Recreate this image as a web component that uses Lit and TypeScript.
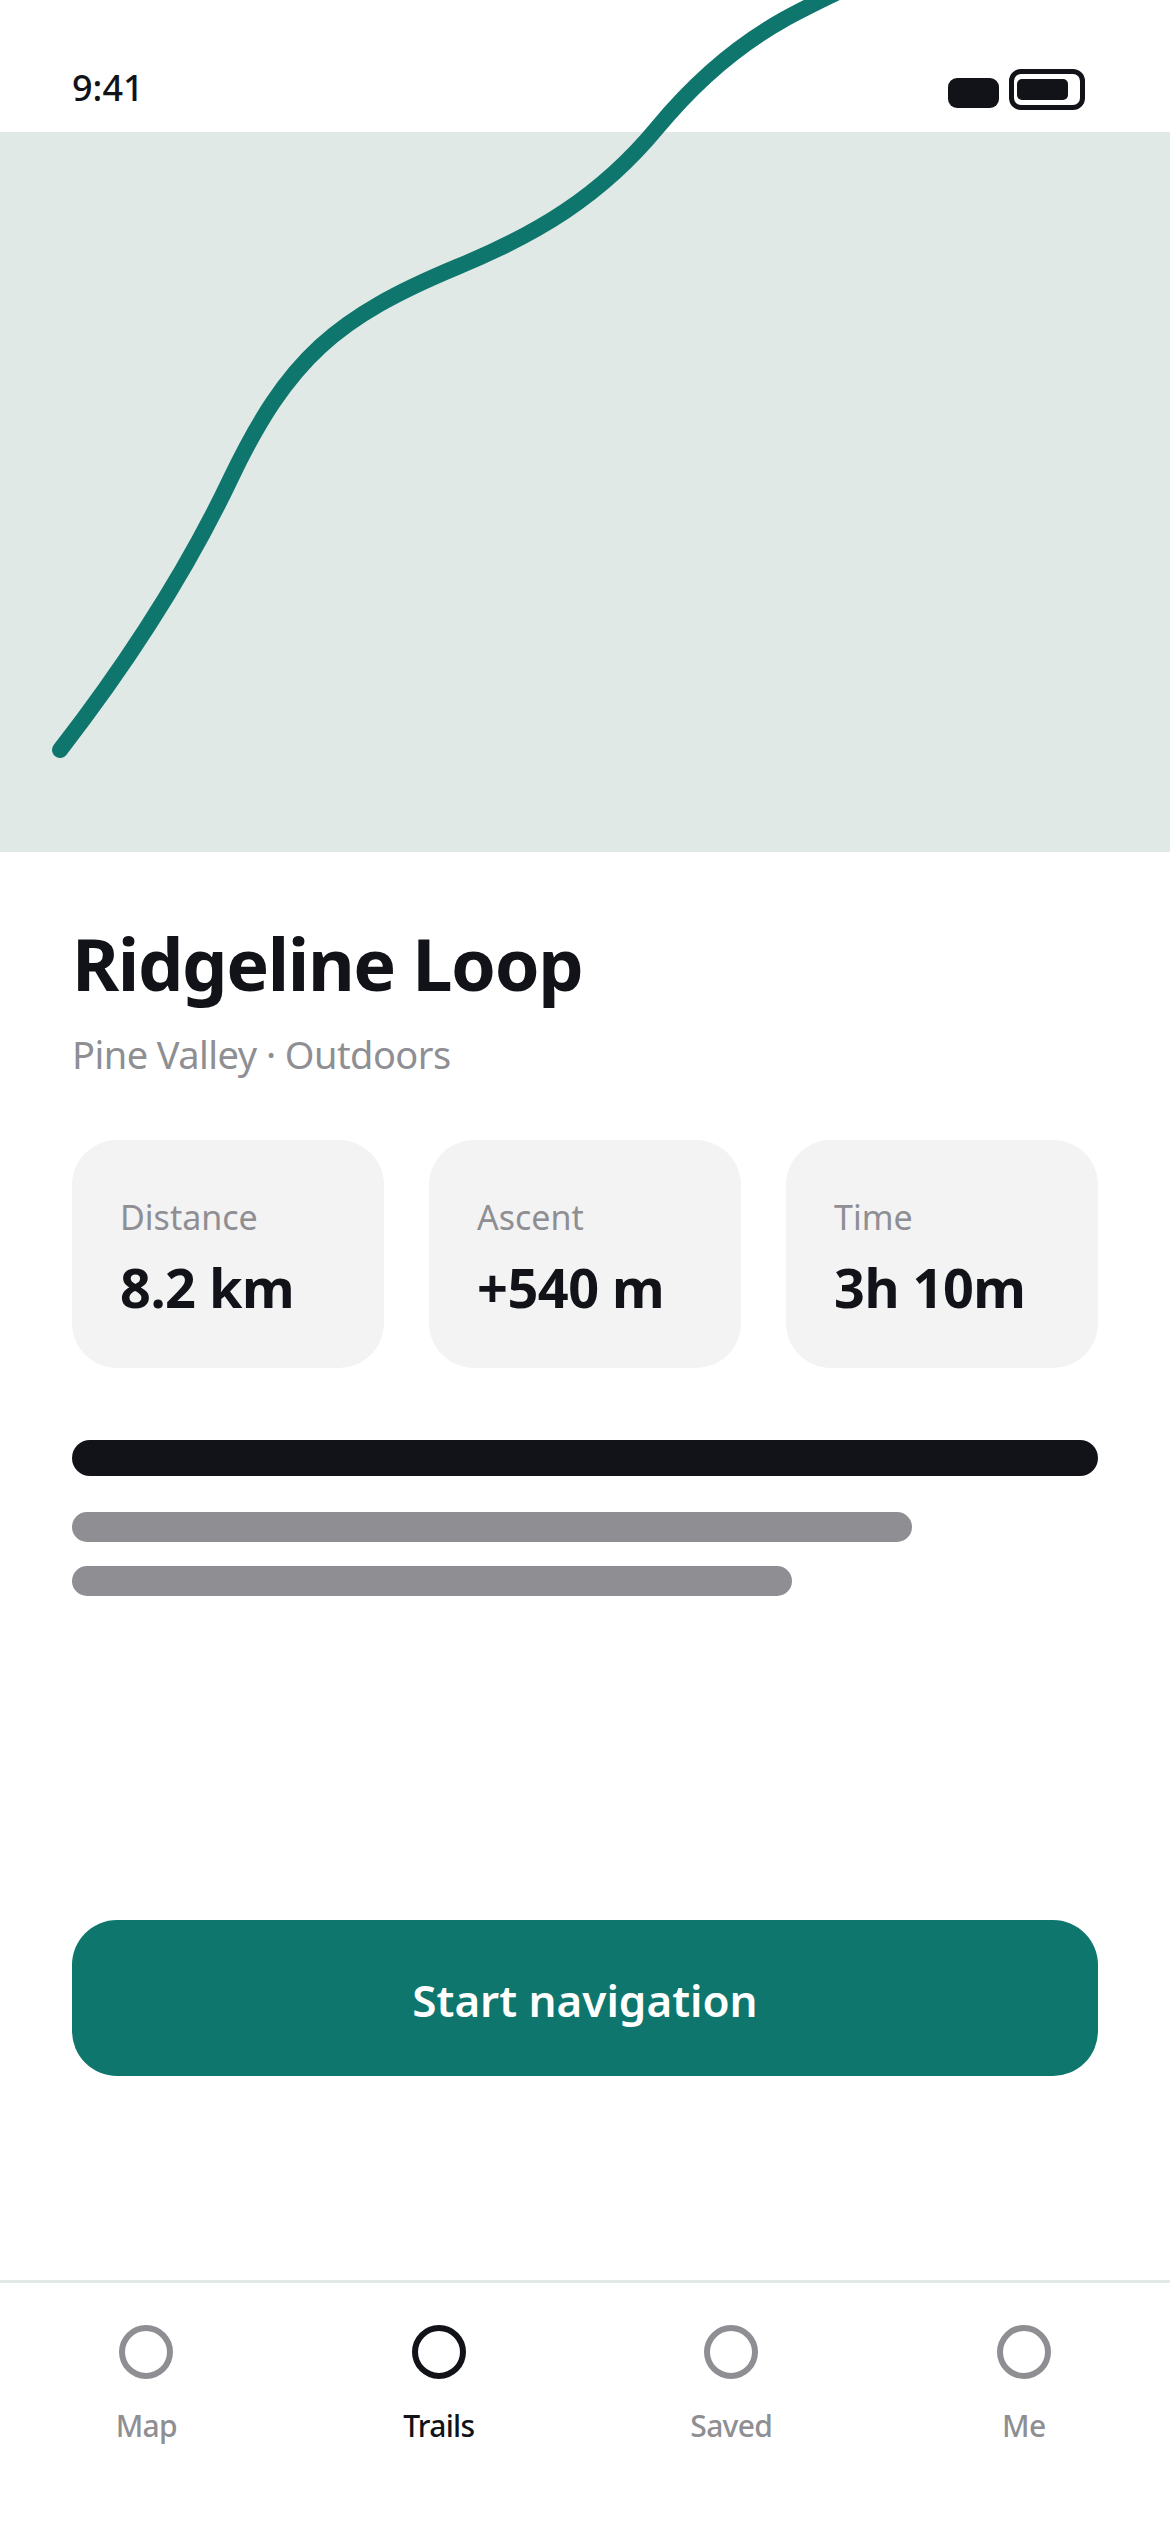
import { LitElement, html, css } from "lit";
import { customElement } from "lit/decorators.js";

@customElement("app-root")
export class AppRoot extends LitElement {
  static styles = css`
    :host { display: flex; flex-direction: column; width: 1170px; height: 2532px; background: #fff; font-family: "Noto Sans", "Open Sans", sans-serif; color: #111318; overflow: hidden; }
    .status { height: 132px; flex: none; position: relative; display: flex; justify-content: space-between; align-items: flex-start; padding: 0 85px 0 72px; box-sizing: border-box; }
    .time { font-size: 36px; font-weight: 500; line-height: 50px; margin-top: 63px; }
    .icons { display: flex; gap: 10px; align-items: flex-end; margin-top: 69px; }
    .sig { width: 51px; height: 30px; border-radius: 9px; background: #111318; margin-bottom: 2px; }
    .bat { width: 76px; height: 41px; box-sizing: border-box; border: 5px solid #111318; border-radius: 12px; padding: 5px 3px; }
    .bat div { width: 51px; height: 21px; border-radius: 5px; background: #111318; }
    .map { height: 720px; flex: none; background: #e0e9e5; position: relative; }
    .route { position: absolute; left: 0; top: -132px; width: 1170px; height: 852px; }
    .body { flex: 1; padding: 0 72px; display: flex; flex-direction: column; }
    h1 { margin: 61px 0 0; font-size: 72px; line-height: 100px; font-weight: 700; letter-spacing: -1.4px; }
    .sub { margin: 15px 0 0; font-size: 38px; line-height: 52px; color: #8e8e93; letter-spacing: -0.55px; }
    .cards { display: flex; gap: 45px; margin-top: 60px; }
    .card { flex: 1; height: 228px; box-sizing: border-box; padding: 54px 48px 0; border-radius: 45px; background: #f3f3f4; }
    .lab { font-size: 34px; line-height: 46px; color: #8e8e93; }
    .val { font-size: 54px; line-height: 74px; font-weight: 700; margin-top: 10px; letter-spacing: -0.5px; }
    .bars { display: flex; flex-direction: column; margin-top: 72px; }
    .bar { border-radius: 15px; height: 30px; background: #8e8e93; margin-top: 24px; }
    .bar.dark { height: 36px; border-radius: 18px; background: #111318; margin: 0 0 12px; }
    .w1 { width: 840px; }
    .w2 { width: 720px; }
    .btn { margin-top: 324px; height: 156px; border-radius: 45px; background: #0f766e; color: #fff; display: flex; align-items: center; justify-content: center; font-size: 44px; font-weight: 600; padding-top: 3px; box-sizing: border-box; }
    nav { flex: none; height: 252px; box-sizing: border-box; border-top: 3px solid #e0e9e5; display: flex; }
    .tab { flex: 1; display: flex; flex-direction: column; align-items: center; padding-top: 42px; color: #8e8e93; }
    .tab i { display: block; width: 54px; height: 54px; box-sizing: border-box; border: 6px solid #8e8e93; border-radius: 50%; }
    .tab span { font-size: 30px; line-height: 42px; margin-top: 26px; font-weight: 500; letter-spacing: -0.7px; }
    .tab.on { color: #111318; }
    .tab.on i { border-color: #111318; }
  `;

  render() {
    const stats = [["Distance", "8.2 km"], ["Ascent", "+540 m"], ["Time", "3h 10m"]];
    const tabs = ["Map", "Trails", "Saved", "Me"];
    return html`
      <div class="status">
        <div class="time">9:41</div>
        <div class="icons"><div class="sig"></div><div class="bat"><div></div></div></div>
      </div>
      <div class="map">
        <svg class="route" viewBox="0 0 1170 852" overflow="visible">
          <path d="M60 750 C 125 666, 184.4 575.7, 230 480 C 288 358, 337 317, 457 267 C 535 235, 600 197, 657 128 C 692 85.6, 734.8 47, 783 20 C 803.4 8.6, 825 -1.5, 846 -12" fill="none" stroke="#0f766e" stroke-width="16" stroke-linecap="round"/>
        </svg>
      </div>
      <div class="body">
        <h1>Ridgeline Loop</h1>
        <div class="sub">Pine Valley · Outdoors</div>
        <div class="cards">
          ${stats.map(([l, v]) => html`<div class="card"><div class="lab">${l}</div><div class="val">${v}</div></div>`)}
        </div>
        <div class="bars">
          <div class="bar dark"></div>
          <div class="bar w1"></div>
          <div class="bar w2"></div>
        </div>
        <div class="btn">Start navigation</div>
      </div>
      <nav>
        ${tabs.map((t, i) => html`<div class="tab ${i === 1 ? "on" : ""}"><i></i><span>${t}</span></div>`)}
      </nav>
    `;
  }
}
